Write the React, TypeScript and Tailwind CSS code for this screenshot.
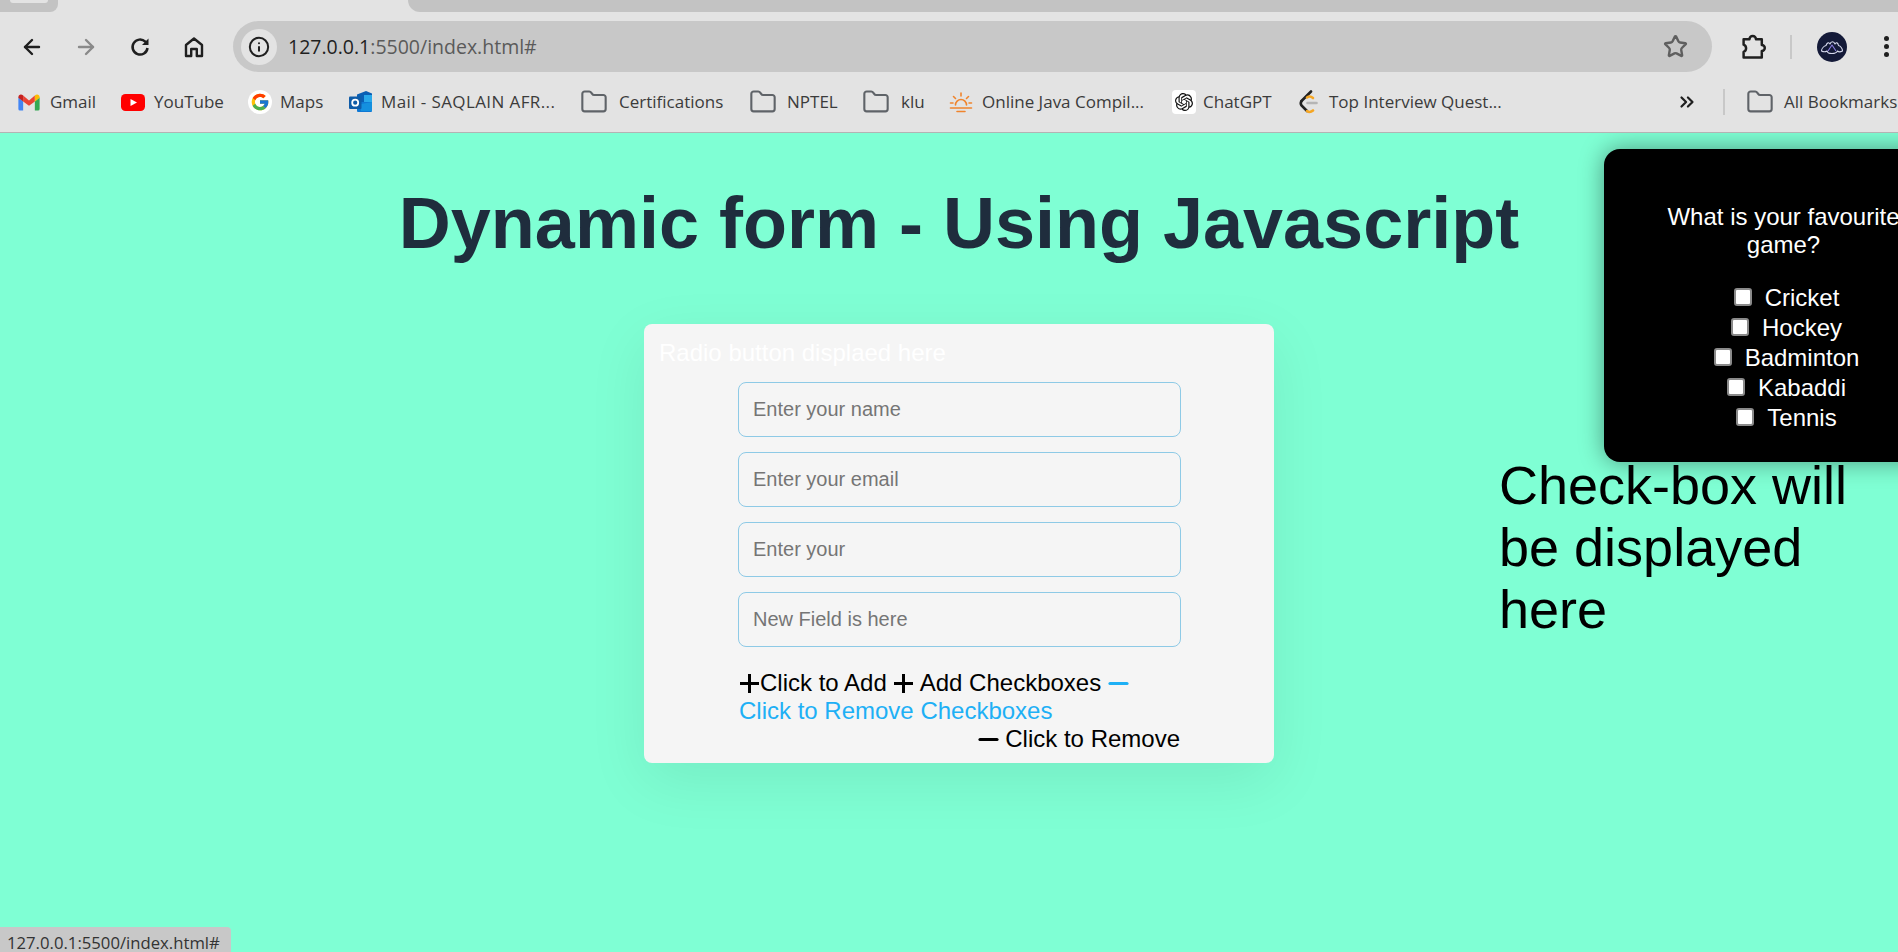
import { ArrowLeft, ArrowRight, Info, Star, Folder, ChevronsRight } from "lucide-react";
import { FcGoogle } from "react-icons/fc";
import { SiOpenai } from "react-icons/si";

const font = { fontFamily: '"Liberation Sans", Arial, sans-serif' };

function Gmail() {
  return (
    <svg width="22" height="17" viewBox="0 0 20 16">
      <path d="M0 3v11a1.500 1.500 0 0 0 1.500 1.500H4.500V7z" fill="#4285f4" />
      <path d="M20 3v11a1.500 1.500 0 0 1-1.500 1.500H15.500V7z" fill="#34a853" />
      <path d="M4.500 7V1.500L10 6l5.500-4.500V7L10 11z" fill="#ea4335" />
      <path d="M0 3c0-2.500 2.800-3.500 4.500-1.500V7L0 3.500z" fill="#c5221f" />
      <path d="M20 3c0-2.500-2.800-3.500-4.500-1.500V7L20 3.500z" fill="#fbbc04" />
    </svg>
  );
}

function Youtube() {
  return (
    <svg width="24" height="17" viewBox="0 0 24 17">
      <rect width="24" height="17" rx="4.500" fill="#ff0000" />
      <path d="M9.500 5l6.500 3.500-6.500 3.500z" fill="#fff" />
    </svg>
  );
}

function GoogleBadge() {
  return (
    <span className="flex h-[24px] w-[24px] items-center justify-center rounded-full bg-white">
      <FcGoogle size={20} />
    </span>
  );
}

function Outlook() {
  return (
    <svg width="24" height="24" viewBox="0 0 24 24">
      <path d="M8 4.500L17 1l6 2.500V12H8z" fill="#0a5fb4" />
      <rect x="15" y="5" width="8" height="7" fill="#28a8ea" />
      <path d="M8 12h15v9a1 1 0 0 1-1 1H9a1 1 0 0 1-1-1z" fill="#0f78d4" />
      <path d="M12 14l11-2v9H12z" fill="#1490df" />
      <rect x="0" y="6.500" width="12.500" height="12.500" rx="1" fill="#0f5ca8" />
      <circle cx="6.200" cy="12.700" r="3" fill="none" stroke="#fff" strokeWidth="1.800" />
    </svg>
  );
}

function Sun() {
  return (
    <svg width="24" height="24" viewBox="0 0 24 24" fill="none" stroke="#f0842c" strokeWidth="1.600" strokeLinecap="round">
      <path d="M6.500 15a5.500 5.500 0 1 1 11 0" />
      <path d="M12 3v3M4.500 6.500l2 2M19.500 6.500l-2 2M1.500 13h2.500M20 13h2.500M1.500 18h21M8 21.500h8" />
    </svg>
  );
}

function Chat() {
  return (
    <span className="flex h-[24px] w-[24px] items-center justify-center rounded-[4px] bg-white">
      <SiOpenai size={18} color="#111" />
    </span>
  );
}

function LeetCode() {
  return (
    <svg width="22" height="24" viewBox="0 0 22 24" fill="none" strokeWidth="2.600" strokeLinecap="round">
      <path d="M13 1.500L3.500 11" stroke="#222" />
      <path d="M3.500 11c-1 1.500-1 3 0 4.500L9 21" stroke="#222" />
      <path d="M9 21c2 1.500 4 1.200 6-.5" stroke="#f5a623" />
      <path d="M9 7.500c2-1.500 4-1.200 6 .5" stroke="#f5a623" />
      <path d="M9.500 13h9" stroke="#b5b5b5" />
    </svg>
  );
}

function Avatar() {
  return (
    <span className="flex h-[30px] w-[30px] items-center justify-center rounded-full bg-[#141a38]">
      <svg width="24" height="16" viewBox="0 0 24 16" fill="none" stroke="#d5d8ec" strokeWidth="1.100" strokeLinejoin="round">
        <path d="M1.500 12c0-3 3-5 4.500-5.500C7 3.500 9 3 10 5c1-3 4-3 5 0 1-2 3-1.500 3.500 1.500 2 .5 4 3 4 5.500-2 1-4 1-5 0-1 2-2 2.500-5.500 2.500S8 14 7 12c-1.500 1-3.500 1-5.500 0z" />
        <path d="M8 12l4-6 4 6" stroke="#8d7fe0" />
      </svg>
    </span>
  );
}

function Reload() {
  return (
    <svg width="24" height="24" viewBox="0 0 24 24" fill="none" stroke="#1f1f1f" strokeWidth="2.500">
      <path d="M19.500 13a7.500 7.500 0 1 1-2.200-6.300L19 8.500" />
      <path d="M20.500 3.500v6.500h-6.500z" fill="#1f1f1f" stroke="none" />
    </svg>
  );
}

function HomeIcon() {
  return (
    <svg width="24" height="24" viewBox="0 0 24 24" fill="none" stroke="#1f1f1f" strokeWidth="2.400" strokeLinejoin="round">
      <path d="M4 21V10l8-6.500L20 10v11h-5.200v-7H9.200v7z" />
    </svg>
  );
}

function Extension() {
  return (
    <svg width="26" height="26" viewBox="3 2 20 20" fill="none" stroke="#1f1f1f" strokeWidth="1.900" strokeLinejoin="round">
      <path d="M5 6h4.500a2.500 2.500 0 0 1 5 0H19v4.500a2.300 2.300 0 0 1 0 4.600V20H5v-4.200a3 3 0 0 0 0-5.600z" />
    </svg>
  );
}

function PlusMark({ color = "currentColor" }: { color?: string }) {
  return (
    <svg width="21" height="21" viewBox="0 0 21 21" className="inline align-[-3px]" stroke={color} strokeWidth="3">
      <path d="M1 10.500h19M10.500 1v19" />
    </svg>
  );
}

function MinusMark({ color = "currentColor" }: { color?: string }) {
  return (
    <svg width="21" height="21" viewBox="0 0 21 21" className="inline align-[-3px]" stroke={color} strokeWidth="3.200" strokeLinecap="round">
      <path d="M2 10.500h17" />
    </svg>
  );
}

function Bookmark({ icon, label, box, iconBox, labelClass }: { icon: React.ReactNode; label: string; box: string; iconBox: string; labelClass?: string }) {
  return (
    <div className={`flex h-7 shrink-0 items-center ${box}`}>
      <span className={`flex shrink-0 items-center ${iconBox}`}>{icon}</span>
      <span className={`whitespace-nowrap text-[17px] text-[#3b3b3b] ${labelClass ?? ""}`} style={{ fontFamily: '"Open Sans", sans-serif' }}>{label}</span>
    </div>
  );
}

const folder = <Folder size={28} color="#5f6368" strokeWidth={1.800} className="-ml-[2px]" />;

function Field({ placeholder }: { placeholder: string }) {
  return (
    <input
      placeholder={placeholder}
      className="h-[55px] w-[443px] rounded-[8px] border border-[#8ecae6] bg-[#f5f5f5] px-[14px] text-[20px] text-black outline-none placeholder:text-[#757575]"
    />
  );
}

function Game({ label }: { label: string }) {
  return (
    <label className="flex h-[30px] items-center justify-center gap-[13px] pl-[7px] text-[24px] text-white">
      <input type="checkbox" className="h-[18px] w-[18px] -translate-y-[1px] appearance-none rounded-[3px] border-2 border-[#8a8a8a] bg-white" />
      {label}
    </label>
  );
}

export default function App() {
  return (
    <div className="flex h-[952px] w-[1898px] flex-col overflow-hidden bg-[#7fffd4]" style={font}>
      <div className="flex h-[133px] shrink-0 flex-col border-b border-[#b3b3b3] bg-[#e3e3e3]">
        <div className="flex h-[12px] items-start">
          <div className="flex h-[12px] w-[58px] justify-center rounded-br-[8px] bg-[#c3c3c3]">
            <div className="h-[3px] w-[38px] rounded-b-[4px] bg-[#e3e3e3]" />
          </div>
          <div className="ml-[350px] h-[12px] flex-1 rounded-bl-[12px] bg-[#c3c3c3]" />
        </div>
        <div className="flex h-[69px] items-center pl-[20px]">
          <ArrowLeft size={24} color="#1f1f1f" strokeWidth={2.400} />
          <ArrowRight size={24} color="#8a8a8a" strokeWidth={2.400} className="ml-[30px]" />
          <span className="ml-[30px]"><Reload /></span>
          <span className="ml-[30px]"><HomeIcon /></span>
          <div className="ml-[27px] flex h-[51px] w-[1479px] shrink-0 items-center rounded-full bg-[#c8c8c8] pl-[8px] pr-[24px]">
            <span className="flex h-[36px] w-[36px] items-center justify-center rounded-full bg-[#e3e3e3]">
              <Info size={22} color="#1f1f1f" strokeWidth={2.200} />
            </span>
            <span className="ml-[11px] flex-1 text-[19.500px] text-[#5a5a5a]" style={{ fontFamily: '"Open Sans", sans-serif' }}>
              <span className="text-[#1f1f1f]">127.0.0.1</span>:5500/index.html#
            </span>
            <Star size={25} color="#5f5f5f" strokeWidth={2.300} />
          </div>
          <span className="ml-[29px]"><Extension /></span>
          <div className="ml-[23px] h-[24px] w-[2px] bg-[#c8c8c8]" />
          <span className="ml-[25px]"><Avatar /></span>
          <span className="ml-[37px] flex flex-col gap-[3px]">
            <i className="block h-[5px] w-[5px] rounded-full bg-[#1f1f1f]" />
            <i className="block h-[5px] w-[5px] rounded-full bg-[#1f1f1f]" />
            <i className="block h-[5px] w-[5px] rounded-full bg-[#1f1f1f]" />
          </span>
        </div>
        <div className="flex h-[42px] items-center pl-[18px]">
          <Bookmark box="w-[103px]" iconBox="w-[32px]" icon={<Gmail />} label="Gmail" />
          <Bookmark box="w-[127px]" iconBox="w-[33px]" icon={<Youtube />} label="YouTube" />
          <Bookmark box="w-[101px]" iconBox="w-[32px]" icon={<GoogleBadge />} label="Maps" />
          <Bookmark box="w-[233px]" iconBox="w-[32px]" icon={<Outlook />} label="Mail - SAQLAIN AFR..." labelClass="tracking-[0.400px]" />
          <Bookmark box="w-[169px]" iconBox="w-[37px]" icon={folder} label="Certifications" />
          <Bookmark box="w-[113px]" iconBox="w-[36px]" icon={folder} label="NPTEL" />
          <Bookmark box="w-[85px]" iconBox="w-[37px]" icon={folder} label="klu" />
          <Bookmark box="w-[223px]" iconBox="w-[33px]" icon={<Sun />} label="Online Java Compil..." />
          <Bookmark box="w-[126px]" iconBox="w-[31px]" icon={<Chat />} label="ChatGPT" />
          <Bookmark box="w-[210px]" iconBox="w-[31px]" icon={<LeetCode />} label="Top Interview Quest..." />
          <div className="flex-1" />
          <ChevronsRight size={22} color="#1f1f1f" strokeWidth={2.400} />
          <div className="ml-[25px] h-[26px] w-[2px] bg-[#c8c8c8]" />
          <div className="ml-[23px] w-[150px] shrink-0">
            <Bookmark box="w-[150px]" iconBox="w-[36px]" icon={folder} label="All Bookmarks" />
          </div>
        </div>
      </div>

      <main className="relative flex-1 overflow-hidden">
        <div className="flex w-[1918px] flex-col items-center">
          <h1 className="mt-[50px] text-[72px] font-bold leading-[80px] text-[#1f2d3d]">Dynamic form - Using Javascript</h1>
          <div className="mt-[61px] grid w-full grid-cols-[1fr_630px_1fr]">
            <div />
            <div className="h-[439px] rounded-[8px] bg-[#f5f5f5] shadow-[0_18px_60px_rgba(0,0,0,0.08)]">
              <p className="pl-[15px] pt-[15px] text-[24px] leading-[28px] text-white">Radio button displaed here</p>
              <div className="mx-[94px] mt-[15px] flex flex-col gap-[15px]">
                <Field placeholder="Enter your name" />
                <Field placeholder="Enter your email" />
                <Field placeholder="Enter your" />
                <Field placeholder="New Field is here" />
              </div>
              <div className="mx-[94px] mt-[22px] pl-[1px] text-[24px] leading-[28px] text-black">
                <div>
                  <PlusMark />Click to Add{" "}
                  <PlusMark /> Add Checkboxes{" "}
                  <MinusMark color="#1eb0f5" />
                </div>
                <div className="text-[#1eb0f5]">Click to Remove Checkboxes</div>
                <div className="text-right"><MinusMark /> Click to Remove</div>
              </div>
            </div>
            <p className="ml-[225px] mt-[130px] text-[54px] leading-[62px] text-black">Check-box will be displayed here</p>
          </div>
        </div>

        <div className="absolute left-[1604px] top-[16px] flex h-[313px] w-[358px] flex-col rounded-[16px] bg-black pt-[54px] text-center text-white shadow-[0_0_24px_rgba(0,0,0,0.4)]">
          <p className="mx-auto w-[290px] pl-[1px] text-[24px] leading-[28px]">What is your favourite game?</p>
          <div className="mt-[24px] flex flex-col">
            <Game label="Cricket" />
            <Game label="Hockey" />
            <Game label="Badminton" />
            <Game label="Kabaddi" />
            <Game label="Tennis" />
          </div>
        </div>

        <div className="absolute bottom-0 left-0 flex h-[25px] w-[231px] items-center rounded-tr-[4px] bg-[#c8c8c8] pl-[7px] pt-[6px] text-[16.700px] text-[#333]" style={{ fontFamily: '"Open Sans", sans-serif' }}>
          127.0.0.1:5500/index.html#
        </div>
      </main>
    </div>
  );
}
